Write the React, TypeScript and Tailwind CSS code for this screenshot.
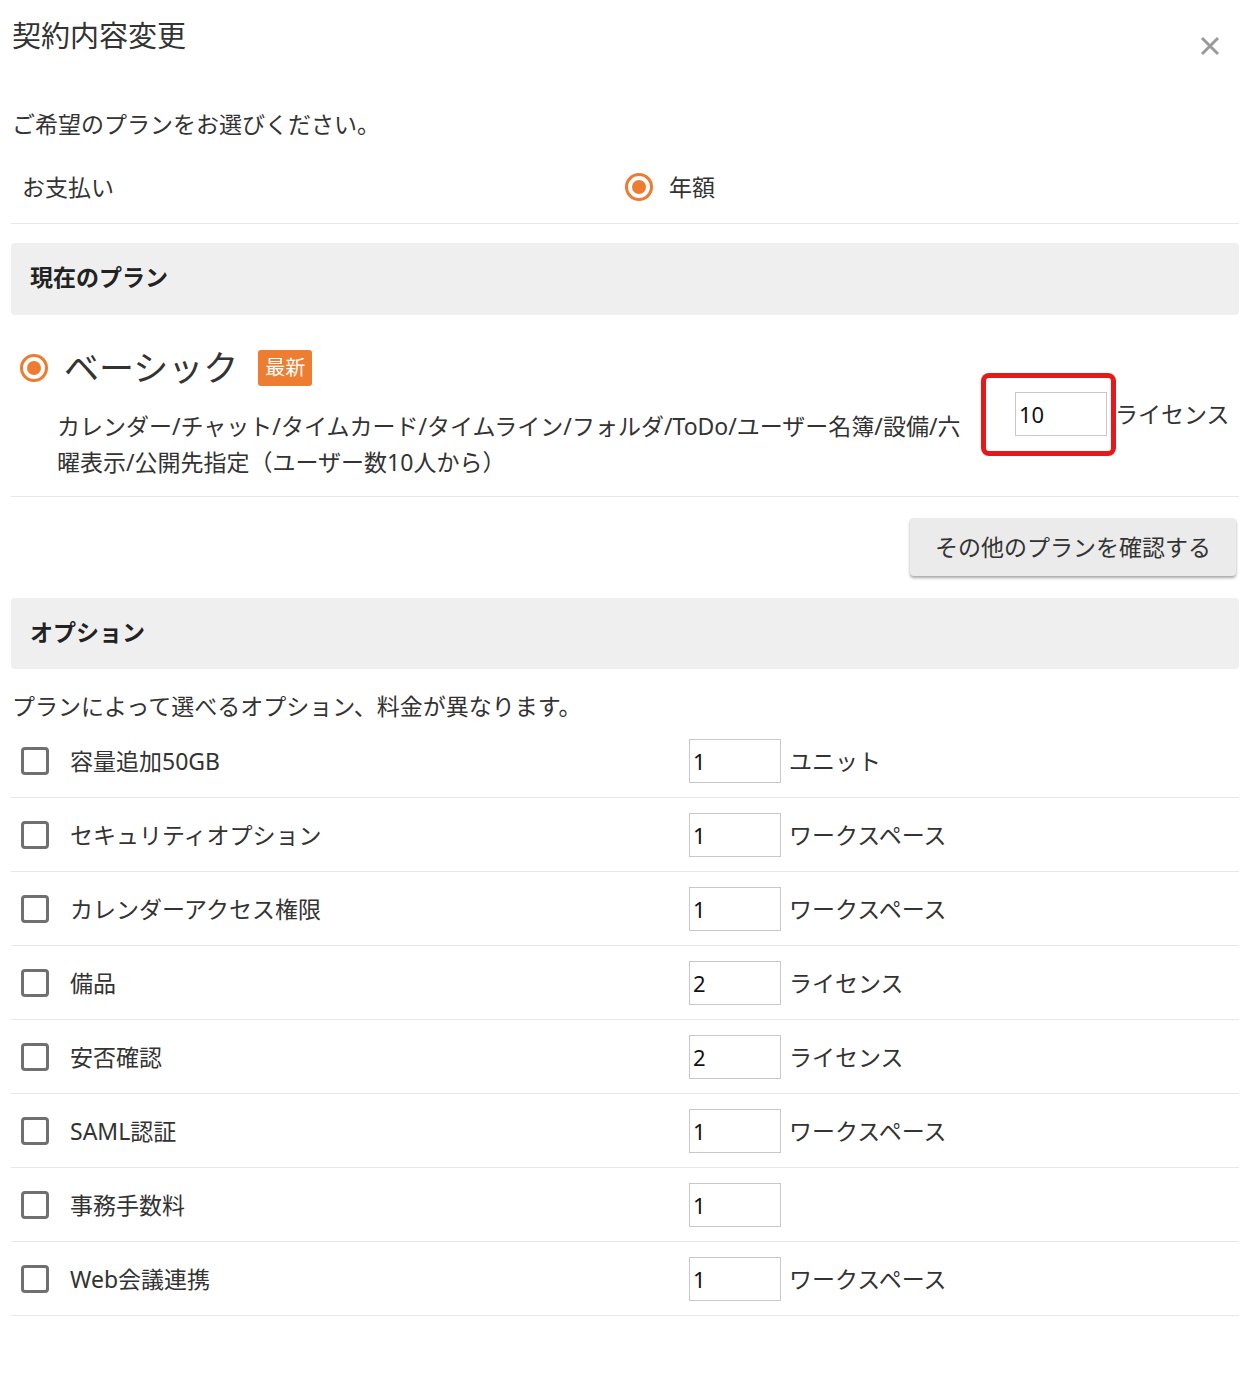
import { useState } from "react"

type Option = {
  label: string
  qty: string
  unit: string
}

const OPTIONS: Option[] = [
  { label: "容量追加50GB", qty: "1", unit: "ユニット" },
  { label: "セキュリティオプション", qty: "1", unit: "ワークスペース" },
  { label: "カレンダーアクセス権限", qty: "1", unit: "ワークスペース" },
  { label: "備品", qty: "2", unit: "ライセンス" },
  { label: "安否確認", qty: "2", unit: "ライセンス" },
  { label: "SAML認証", qty: "1", unit: "ワークスペース" },
  { label: "事務手数料", qty: "1", unit: "" },
  { label: "Web会議連携", qty: "1", unit: "ワークスペース" },
]

function Radio() {
  return (
    <span className="w-[28px] h-[28px] rounded-full border-[3px] border-[#ee7b30] flex items-center justify-center shrink-0">
      <span className="w-[14px] h-[14px] rounded-full bg-[#ee7b30]" />
    </span>
  )
}

function Checkbox({ checked, onClick }: { checked: boolean; onClick: () => void }) {
  return (
    <button
      onClick={onClick}
      className="w-[28px] h-[28px] rounded-[4px] border-[3px] border-[#707070] bg-white shrink-0 flex items-center justify-center"
    >
      {checked && <span className="w-[12px] h-[12px] bg-[#707070]" />}
    </button>
  )
}

function QtyInput({ value }: { value: string }) {
  return (
    <input
      type="text"
      defaultValue={value}
      className="w-[92px] h-[44px] border border-[#c8c8c8] pl-[3px] text-[22px] text-[#111] outline-none bg-white"
    />
  )
}

export default function App() {
  const [checked, setChecked] = useState<boolean[]>(OPTIONS.map(() => false))

  return (
    <div className="w-[1246px] min-h-[1384px] bg-white pl-[11px] pr-[7px] text-[#333] font-['Noto_Sans','Noto_Sans_CJK_JP',sans-serif]">
      {/* Header */}
      <div className="flex items-start justify-between pt-[16px]">
        <h1 className="text-[29px] leading-[40px] pl-[1px] font-normal">契約内容変更</h1>
        <button className="mt-[20px] mr-[19px] w-[20px] h-[20px]">
          <svg viewBox="0 0 20 20" className="w-[20px] h-[20px]">
            <path d="M2 2 L18 18 M18 2 L2 18" stroke="#9a9a9a" strokeWidth="3" />
          </svg>
        </button>
      </div>

      <p className="mt-[50px] text-[23px] leading-[36px] pl-[1px]">ご希望のプランをお選びください。</p>

      {/* Payment */}
      <div className="mt-[8px] grid grid-cols-2 h-[74px] items-center border-b border-[#e8e8e8]">
        <span className="pl-[11px] text-[23px] leading-[36px]">お支払い</span>
        <label className="flex items-center gap-[16px] text-[23px] leading-[36px]">
          <Radio />
          年額
        </label>
      </div>

      {/* Current plan */}
      <div className="mt-[19px] h-[72px] rounded-[4px] bg-[#efefef] flex items-center px-[19px] pb-[4px]">
        <h2 className="text-[23px] leading-[36px] font-bold text-[#222]">現在のプラン</h2>
      </div>

      <div className="flex pt-[31px] pb-[16px] border-b border-[#e8e8e8]">
        <div className="w-[1004px] shrink-0">
          <div className="flex items-center h-[44px] pl-[9px]">
            <Radio />
            <span className="ml-[16px] text-[35px] leading-[44px]">ベーシック</span>
            <span className="ml-[20px] h-[36px] px-[7px] rounded-[3px] bg-[#ed7d31] text-white text-[20px] leading-[36px]">
              最新
            </span>
          </div>
          <p className="mt-[18px] pl-[46px] text-[23px] leading-[36px]">
            カレンダー/チャット/タイムカード/タイムライン/フォルダ/ToDo/ユーザー名簿/設備/六
            <br />
            曜表示/公開先指定（ユーザー数10人から）
          </p>
        </div>
        <div className="relative flex items-center h-[44px] mt-[46px]">
          <QtyInput value="10" />
          <span className="ml-[8px] text-[23px] leading-[36px] whitespace-nowrap">ライセンス</span>
          {/* highlight annotation */}
          <div className="absolute left-[-34px] top-[-19px] w-[135px] h-[83px] rounded-[8px] border-[5px] border-[#e3191b] pointer-events-none" />
        </div>
      </div>

      <div className="flex justify-end mt-[21px] mr-[3px]">
        <button className="w-[326px] h-[58px] rounded-[4px] bg-[#ebebeb] text-[23px] text-[#333] shadow-[0_2px_3px_rgba(0,0,0,0.35)]">
          その他のプランを確認する
        </button>
      </div>

      {/* Options */}
      <div className="mt-[22px] h-[71px] rounded-[4px] bg-[#efefef] flex items-center px-[19px] pb-[4px]">
        <h2 className="text-[23px] leading-[36px] font-bold text-[#222]">オプション</h2>
      </div>

      <p className="mt-[19px] pl-[1px] text-[23px] leading-[36px]">
        プランによって選べるオプション、料金が異なります。
      </p>

      <div>
        {OPTIONS.map((o, i) => (
          <div key={o.label} className="flex items-center h-[74px] border-b border-[#e8e8e8]">
            <div className="w-[678px] shrink-0 flex items-center pl-[10px]">
              <Checkbox
                checked={checked[i]}
                onClick={() => setChecked((prev) => prev.map((c, j) => (j === i ? !c : c)))}
              />
              <span className="ml-[21px] text-[23px] leading-[36px]">{o.label}</span>
            </div>
            <QtyInput value={o.qty} />
            {o.unit && <span className="ml-[8px] text-[23px] leading-[36px]">{o.unit}</span>}
          </div>
        ))}
      </div>
    </div>
  )
}
